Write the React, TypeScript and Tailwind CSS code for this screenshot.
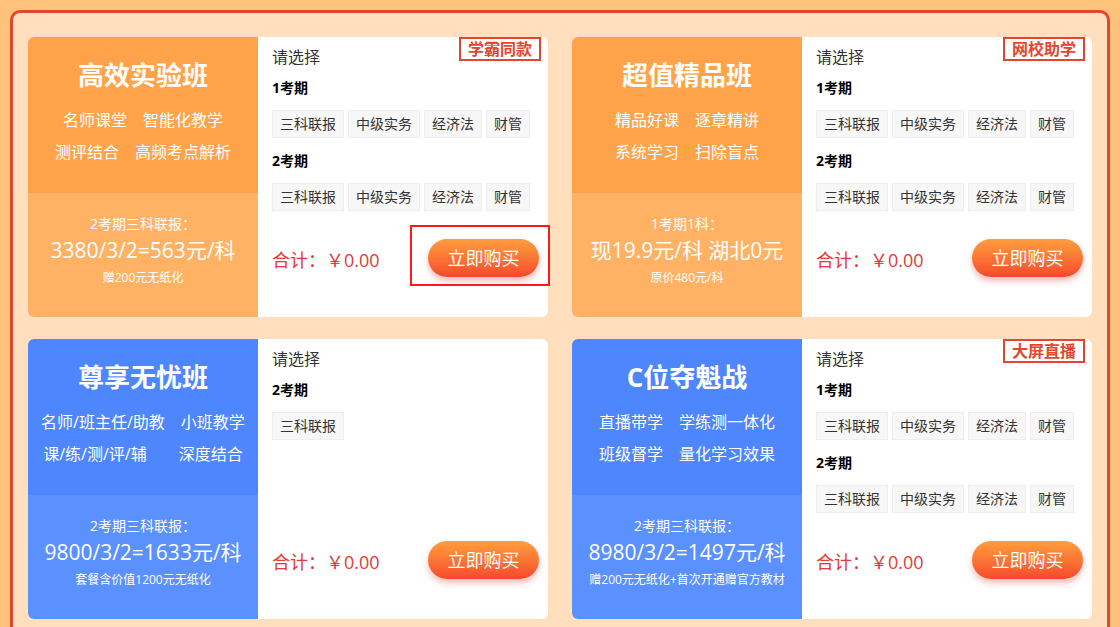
import React from "react"

type Period = { label: string; tags: string[] }

type Course = {
  title: string
  tone: "orange" | "blue"
  features: string[][]
  wideSecond?: boolean
  intro: string
  price: string
  note: string
  badge?: string
  periods: Period[]
  focus?: boolean
}

const allSubjects = ["三科联报", "中级实务", "经济法", "财管"]

const courses: Course[] = [
  {
    title: "高效实验班",
    tone: "orange",
    features: [["名师课堂", "智能化教学"], ["测评结合", "高频考点解析"]],
    intro: "2考期三科联报：",
    price: "3380/3/2=563元/科",
    note: "赠200元无纸化",
    badge: "学霸同款",
    periods: [{ label: "1考期", tags: allSubjects }, { label: "2考期", tags: allSubjects }],
    focus: true,
  },
  {
    title: "超值精品班",
    tone: "orange",
    features: [["精品好课", "逐章精讲"], ["系统学习", "扫除盲点"]],
    intro: "1考期1科：",
    price: "现19.9元/科 湖北0元",
    note: "原价480元/科",
    badge: "网校助学",
    periods: [{ label: "1考期", tags: allSubjects }, { label: "2考期", tags: allSubjects }],
  },
  {
    title: "尊享无忧班",
    tone: "blue",
    features: [["名师/班主任/助教", "小班教学"], ["课/练/测/评/辅", "深度结合"]],
    wideSecond: true,
    intro: "2考期三科联报：",
    price: "9800/3/2=1633元/科",
    note: "套餐含价值1200元无纸化",
    periods: [{ label: "2考期", tags: ["三科联报"] }],
  },
  {
    title: "C位夺魁战",
    tone: "blue",
    features: [["直播带学", "学练测一体化"], ["班级督学", "量化学习效果"]],
    intro: "2考期三科联报：",
    price: "8980/3/2=1497元/科",
    note: "赠200元无纸化+首次开通赠官方教材",
    badge: "大屏直播",
    periods: [{ label: "1考期", tags: allSubjects }, { label: "2考期", tags: allSubjects }],
  },
]

function CourseCard({ c }: { c: Course }) {
  const top = c.tone === "orange" ? "bg-[#ffa34b]" : "bg-[#4e86fe]"
  const bottom = c.tone === "orange" ? "bg-[#ffb264]" : "bg-[#5b90ff]"
  return (
    <div className="flex h-[280px]">
      <div className="w-[230px] flex flex-col rounded-l-[6px] overflow-hidden text-white">
        <div className={`${top} h-[156px] flex flex-col items-center pt-[22px]`}>
          <div className="text-[26px] leading-[32px] font-bold">{c.title}</div>
          <div className="mt-[13px] text-[16px] leading-[32px]">
            {c.features.map((line, i) => (
              <div key={i} className={`flex justify-center ${c.wideSecond && i === 1 ? "gap-x-8" : "gap-x-4"}`}>
                {line.map((f) => (
                  <span key={f}>{f}</span>
                ))}
              </div>
            ))}
          </div>
        </div>
        <div className={`${bottom} flex-1 flex flex-col items-center pt-[21px]`}>
          <div className="text-[14px] leading-[20px]">{c.intro}</div>
          <div className="mt-[2px] text-[21px] leading-[28px]">{c.price}</div>
          <div className="mt-[6px] text-[12px] leading-[16px]">{c.note}</div>
        </div>
      </div>

      <div className="relative flex-1 bg-white rounded-r-[6px] flex flex-col pl-[14px] pr-[9px] pt-[10px] pb-[40px]">
        {c.badge && (
          <div className="absolute top-0 right-[7px] h-[24px] px-[7px] border-2 border-[#e5452e] bg-white text-[#e5452e] text-[16px] leading-[20px] font-bold">
            {c.badge}
          </div>
        )}
        <div className="text-[16px] leading-[20px] text-[#333]">请选择</div>
        <div className="mt-[11px] flex flex-col gap-[13px]">
          {c.periods.map((p) => (
            <div key={p.label}>
              <div className="text-[14px] leading-[20px] font-bold text-black">{p.label}</div>
              <div className="mt-[12px] flex gap-[4px]">
                {p.tags.map((t) => (
                  <span
                    key={t}
                    className="h-[28px] px-[7px] bg-[#f7f7f7] border border-[#eeeeee] text-[14px] leading-[26px] text-[#333]"
                  >
                    {t}
                  </span>
                ))}
              </div>
            </div>
          ))}
        </div>
        <div className="mt-auto flex items-center justify-between">
          <span className="text-[18px] text-[#e4393c] mt-[4px]">合计：￥0.00</span>
          <button className="w-[111px] h-[38px] rounded-full bg-linear-to-b from-[#ff9d3e] to-[#f6462c] text-white text-[18px] shadow-[0_4px_6px_rgba(210,70,50,0.35)]">
            立即购买
          </button>
        </div>
        {c.focus && (
          <div className="absolute left-[152px] top-[188px] w-[140px] h-[61px] border-2 border-[#ff1a1a] pointer-events-none" />
        )}
      </div>
    </div>
  )
}

export default function App() {
  return (
    <div
      className="w-screen h-[627px] overflow-hidden bg-[#ffc27a] pt-[10px] px-[10px]"
      style={{ fontFamily: '"Open Sans", "Noto Sans CJK SC", sans-serif' }}
    >
      <div className="border-[3px] border-[#e5452e] rounded-[10px] bg-[#ffdfbd] px-[15px] pt-[24px] pb-[24px] grid grid-cols-2 gap-x-[24px] gap-y-[22px]">
        {courses.map((c) => (
          <CourseCard key={c.title} c={c} />
        ))}
      </div>
    </div>
  )
}
